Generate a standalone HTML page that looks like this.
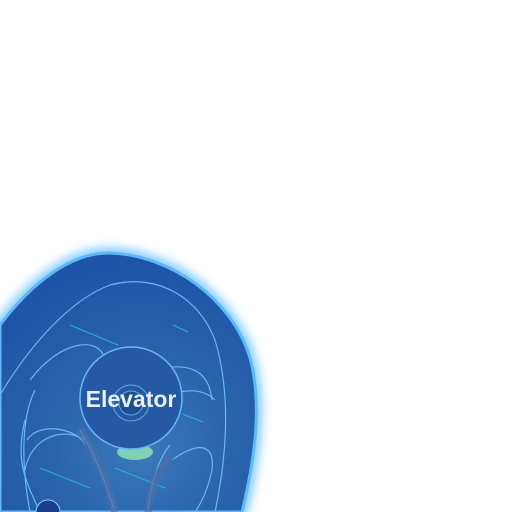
<!DOCTYPE html><html><head><style>html,body{margin:0;background:#fff;width:512px;height:512px;overflow:hidden}</style></head><body>
<svg width="512" height="512" viewBox="0 0 512 512" xmlns="http://www.w3.org/2000/svg">
<defs>
<filter id="g" x="-20%" y="-20%" width="140%" height="140%"><feGaussianBlur stdDeviation="5"/></filter>
<radialGradient id="bg" cx="0.55" cy="0.75" r="0.7"><stop offset="0" stop-color="#3b7ab8"/><stop offset="0.5" stop-color="#2a63ad"/><stop offset="1" stop-color="#1f55a8"/></radialGradient>
</defs>
<path d="M0,325 C30,285 70,252 110,253 C170,255 232,298 250,358 C264,410 252,470 242,512 L0,512 Z" fill="none" stroke="#6cc4ff" stroke-width="10" filter="url(#g)"/>
<path d="M0,325 C30,285 70,252 110,253 C170,255 232,298 250,358 C264,410 252,470 242,512 L0,512 Z" fill="url(#bg)" stroke="#5fb8f5" stroke-width="3"/>
<g fill="none" stroke="#6ab6f0" stroke-width="1.2">
<path d="M0,395 C30,345 70,300 110,285 C160,272 200,300 215,340 C230,390 228,450 215,512"/>
<path d="M30,380 C60,340 100,335 105,360"/>
<path d="M25,420 C15,460 25,480 40,512"/>
<path d="M35,390 C20,420 22,470 30,512"/>
<path d="M27,440 C40,420 80,430 85,445"/>
<path d="M25,470 C30,440 60,425 85,440"/>
<path d="M172,367 C200,365 210,380 212,400"/>
<path d="M180,392 C200,388 210,395 215,400"/>
<path d="M172,460 C200,440 215,445 212,470 C208,490 200,505 195,512"/>
<path d="M80,430 C95,455 105,480 115,512"/>
<path d="M170,445 C158,460 150,485 148,512"/>
</g>
<g stroke="#2ab0d0" stroke-width="1">
<line x1="70" y1="325" x2="118" y2="345"/><line x1="173" y1="325" x2="188" y2="332"/>
<line x1="182" y1="414" x2="203" y2="422"/><line x1="40" y1="468" x2="90" y2="488"/>
<line x1="115" y1="468" x2="165" y2="488"/>
</g>
<path d="M80,430 C90,445 105,470 115,512" stroke="#4a6fa8" stroke-width="8" fill="none" opacity="0.7"/>
<path d="M172,455 C158,470 150,490 148,512" stroke="#4a6fa8" stroke-width="8" fill="none" opacity="0.7"/>
<ellipse cx="135" cy="452" rx="18" ry="8" fill="#7fd0b8"/>
<circle cx="131" cy="398" r="51" fill="#2659a5" stroke="#6ab6f0" stroke-width="1.5"/>
<circle cx="131" cy="403" r="18" fill="none" stroke="#5fa8e0" stroke-width="1"/>
<circle cx="131" cy="403" r="12" fill="#1e4d92" stroke="#5fa8e0" stroke-width="1"/>
<text x="131" y="407" text-anchor="middle" font-family="Liberation Sans, sans-serif" font-weight="bold" font-size="23" fill="#e8eef8">Elevator</text>
<circle cx="48" cy="512" r="12" fill="#1a3f8a" stroke="#8fc8ff" stroke-width="1"/>
</svg>
</body></html>
